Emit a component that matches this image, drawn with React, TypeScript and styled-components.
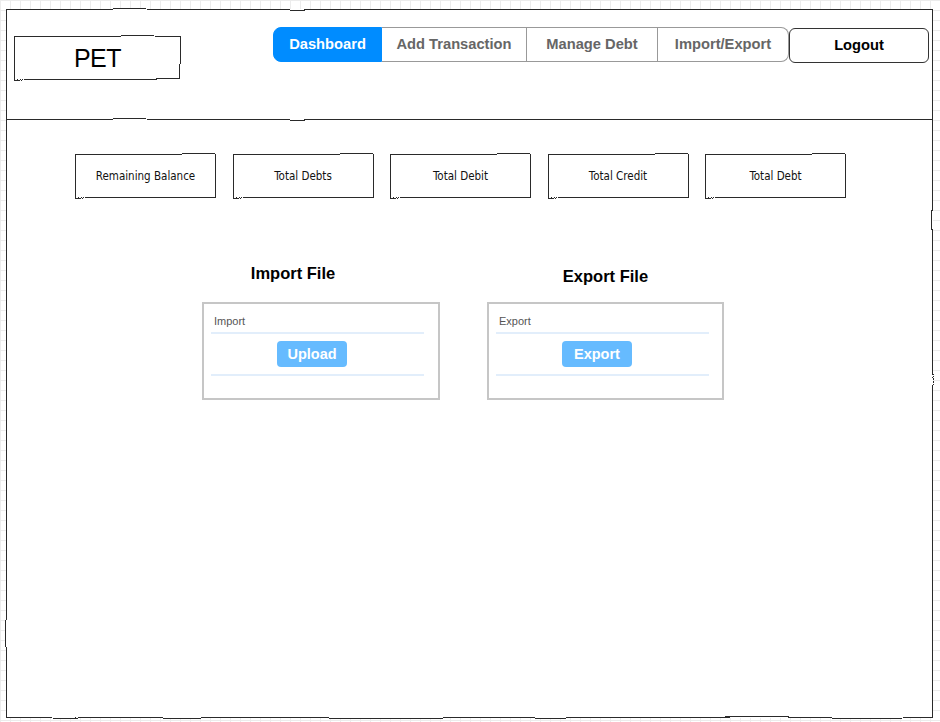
import React from "react";
import styled, { createGlobalStyle, css } from "styled-components";

const Global = createGlobalStyle`
  html, body { margin: 0; padding: 0; }
  body {
    width: 940px;
    height: 722px;
    overflow: hidden;
    background-color: #ffffff;
    background-image:
      linear-gradient(#ececec 1px, transparent 1px),
      linear-gradient(90deg, #ececec 1px, transparent 1px);
    background-size: 10px 10px;
    background-position: 0 0;
    font-family: "Liberation Sans", Arial, sans-serif;
  }
`;

const rough = css`
  position: relative;
  &::before {
    content: "";
    position: absolute;
    inset: 0;
    border: 1.6px solid #2a2a2a;
    filter: url(#rough);
    pointer-events: none;
  }
`;

const Filters = styled.svg`
  position: absolute;
  width: 0;
  height: 0;
`;

const Frame = styled.div`
  ${rough};
  margin: 9px 0 0 6px;
  width: 927px;
  height: 709px;
  background: #fff;
  box-sizing: border-box;
  display: flex;
  flex-direction: column;
`;

const Header = styled.header`
  position: relative;
  height: 111px;
  box-sizing: border-box;
  padding: 18px 0 0 8px;
  display: flex;
  align-items: flex-start;
  &::after {
    content: "";
    position: absolute;
    left: 0;
    right: 0;
    bottom: 0;
    border-bottom: 1.6px solid #2a2a2a;
    filter: url(#rough);
  }
`;

const Logo = styled.div`
  ${rough};
  margin-top: 9px;
  width: 167px;
  height: 44px;
  display: flex;
  align-items: center;
  justify-content: center;
  font-size: 25px;
  color: #000;
  letter-spacing: -0.5px;
`;

const Nav = styled.nav`
  margin-left: 92px;
  display: flex;
  height: 35px;
`;

const NavButton = styled.button<{ $active?: boolean; $w: number; $pos?: "first" | "last" }>`
  width: ${(p) => p.$w}px;
  height: 35px;
  box-sizing: border-box;
  margin: 0;
  padding: 0 0 2px 0;
  font-family: "Liberation Sans", Arial, sans-serif;
  font-weight: bold;
  font-size: 14.7px;
  color: ${(p) => (p.$active ? "#ffffff" : "#666666")};
  background: ${(p) => (p.$active ? "#008cff" : "#ffffff")};
  border: 1px solid ${(p) => (p.$active ? "#008cff" : "#999999")};
  border-left-width: ${(p) => (p.$pos === "first" ? 1 : 0)}px;
  border-radius: ${(p) =>
    p.$pos === "first" ? "8px 0 0 8px" : p.$pos === "last" ? "0 8px 8px 0" : "0"};
  cursor: pointer;
`;

const Logout = styled.button`
  margin-top: 1px;
  width: 140px;
  height: 35px;
  box-sizing: border-box;
  padding: 0 0 2px 0;
  background: #fff;
  border: 1px solid #333;
  border-radius: 6px;
  font-family: "Liberation Sans", Arial, sans-serif;
  font-weight: bold;
  font-size: 14.7px;
  color: #000;
  cursor: pointer;
`;

const Body = styled.main`
  display: flex;
  flex-direction: column;
  padding-top: 34px;
`;

const Cards = styled.div`
  display: flex;
  gap: 16.5px;
  padding-left: 69px;
`;

const Card = styled.div`
  ${rough};
  width: 141px;
  height: 44px;
  display: flex;
  align-items: center;
  justify-content: center;
  font-family: "DejaVu Sans Condensed", "DejaVu Sans", sans-serif;
  font-size: 11.5px;
  color: #111;
`;

const Sections = styled.div`
  display: flex;
  gap: 47px;
  padding-left: 196px;
  margin-top: 65px;
`;

const Section = styled.section<{ $w: number }>`
  width: ${(p) => p.$w}px;
  display: flex;
  flex-direction: column;
`;

const HeadingSlot = styled.div`
  height: 39px;
`;

const Heading = styled.h2<{ $dy: number; $dx: number }>`
  margin: 0;
  padding-top: ${(p) => p.$dy}px;
  transform: translateX(${(p) => p.$dx}px);
  text-align: center;
  font-family: "Liberation Sans", Arial, sans-serif;
  font-weight: bold;
  font-size: 16.5px;
  line-height: 20px;
  color: #000;
`;

const Panel = styled.div`
  height: 98px;
  box-sizing: border-box;
  border: 2px solid #c6c6c6;
  padding: 11px 0 0 7px;
  display: flex;
  flex-direction: column;
`;

const PanelLabel = styled.div`
  padding-left: 3px;
  font-family: "Liberation Sans", Arial, sans-serif;
  font-size: 11px;
  line-height: 13px;
  color: #555;
`;

const Rule = styled.div`
  width: 213px;
  height: 2px;
  background: #e2eefb;
`;

const TopRule = styled(Rule)`
  margin-top: 4px;
`;

const BottomRule = styled(Rule)``;

const ActionRow = styled.div`
  height: 40px;
  display: flex;
  align-items: center;
  padding-left: 66px;
`;

const Action = styled.button`
  width: 70px;
  height: 26px;
  border: none;
  border-radius: 4px;
  background: #66bbff;
  color: #fff;
  font-family: "Liberation Sans", Arial, sans-serif;
  font-weight: bold;
  font-size: 14.5px;
  padding: 0 0 1px 0;
  cursor: pointer;
`;

const stats = ["Remaining Balance", "Total Debts", "Total Debit", "Total Credit", "Total Debt"];

const navItems: { label: string; w: number; pos?: "first" | "last"; active?: boolean }[] = [
  { label: "Dashboard", w: 109, pos: "first", active: true },
  { label: "Add Transaction", w: 145 },
  { label: "Manage Debt", w: 131 },
  { label: "Import/Export", w: 131, pos: "last" },
];

export default function App() {
  return (
    <>
      <Global />
      <Filters aria-hidden="true">
        <filter id="rough" x="-5%" y="-20%" width="110%" height="140%">
          <feTurbulence type="fractalNoise" baseFrequency="0.012" numOctaves="1" seed="7" result="n" />
          <feDisplacementMap in="SourceGraphic" in2="n" scale="3" xChannelSelector="R" yChannelSelector="G" />
        </filter>
      </Filters>
      <Frame>
        <Header>
          <Logo>PET</Logo>
          <Nav>
            {navItems.map((n) => (
              <NavButton key={n.label} $w={n.w} $pos={n.pos} $active={n.active}>
                {n.label}
              </NavButton>
            ))}
          </Nav>
          <Logout>Logout</Logout>
        </Header>
        <Body>
          <Cards>
            {stats.map((s) => (
              <Card key={s}>{s}</Card>
            ))}
          </Cards>
          <Sections>
            <Section $w={238}>
              <HeadingSlot>
                <Heading $dy={0} $dx={-28}>Import File</Heading>
              </HeadingSlot>
              <Panel>
                <PanelLabel>Import</PanelLabel>
                <TopRule />
                <ActionRow>
                  <Action>Upload</Action>
                </ActionRow>
                <BottomRule />
              </Panel>
            </Section>
            <Section $w={237}>
              <HeadingSlot>
                <Heading $dy={3} $dx={0}>Export File</Heading>
              </HeadingSlot>
              <Panel>
                <PanelLabel>Export</PanelLabel>
                <TopRule />
                <ActionRow>
                  <Action>Export</Action>
                </ActionRow>
                <BottomRule />
              </Panel>
            </Section>
          </Sections>
        </Body>
      </Frame>
    </>
  );
}
